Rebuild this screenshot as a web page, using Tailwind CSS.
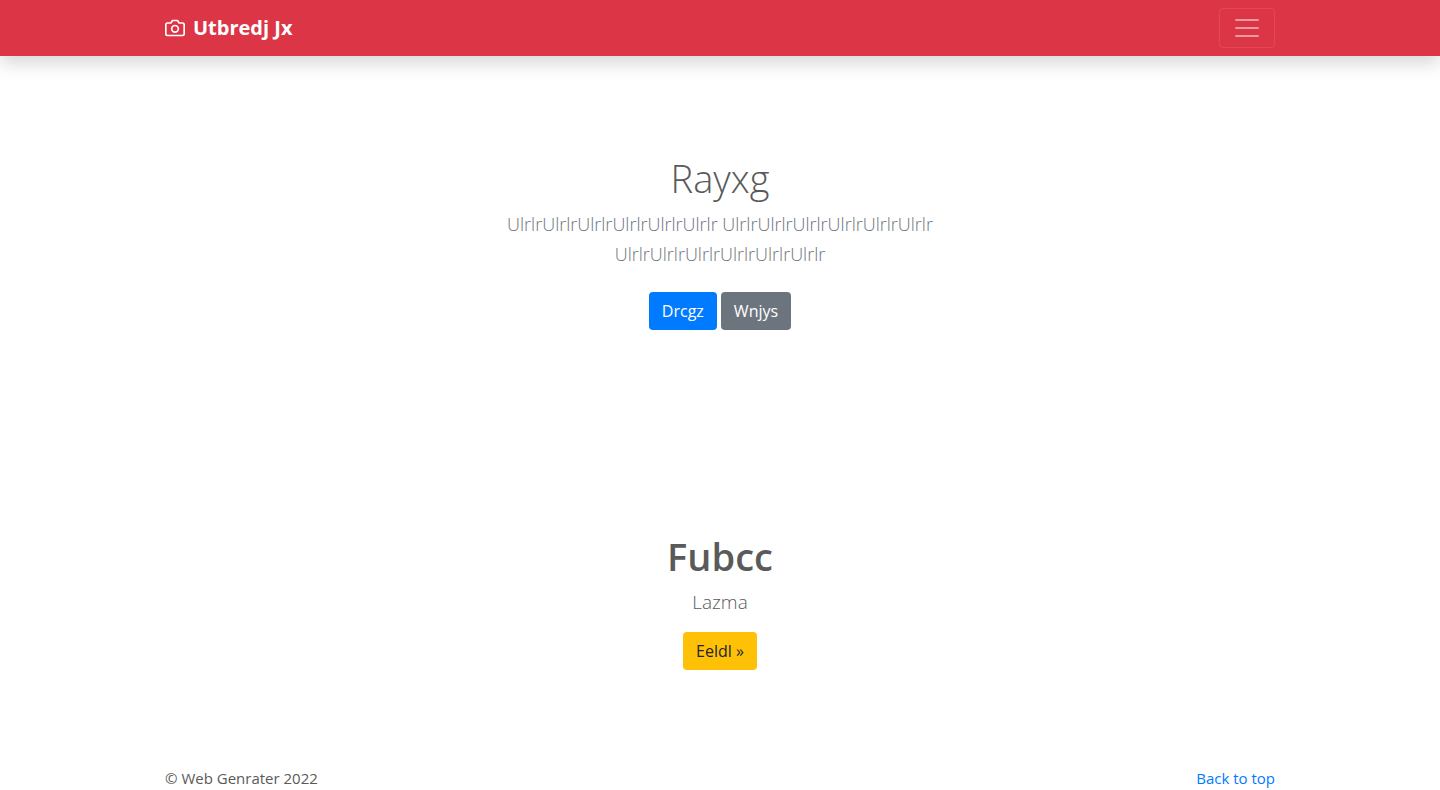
<!DOCTYPE html>
<html lang="en">
<head>
<meta charset="utf-8">
<meta name="viewport" content="width=device-width, initial-scale=1">
<title>Utbredj Jx</title>
<script src="https://cdn.jsdelivr.net/npm/@tailwindcss/browser@4"></script>
</head>
<body id="top" class="min-h-screen flex flex-col bg-white text-[#5a5a5a] text-base font-['Segoe_UI','Open_Sans','Noto_Sans',sans-serif]">
<header class="bg-[#dc3545] shadow-[0_8px_16px_rgba(0,0,0,0.15)]">
  <div class="max-w-[1110px] mx-auto h-14 flex items-center justify-between">
    <a href="#" class="flex items-center gap-2 text-white text-xl font-bold">
      <svg class="size-5" viewBox="0 0 24 24" fill="none" stroke="currentColor" stroke-width="2" stroke-linecap="round" stroke-linejoin="round" aria-hidden="true"><path d="M23 19a2 2 0 0 1-2 2H3a2 2 0 0 1-2-2V8a2 2 0 0 1 2-2h4l2-3h6l2 3h4a2 2 0 0 1 2 2z"/><circle cx="12" cy="13" r="4"/></svg>
      <span>Utbredj Jx</span>
    </a>
    <button type="button" aria-label="Toggle navigation" class="w-14 h-10 flex items-center justify-center rounded border border-white/10 text-white/50">
      <svg class="size-[30px]" viewBox="0 0 30 30" fill="none" stroke="currentColor" stroke-width="2" stroke-linecap="round" stroke-miterlimit="10" aria-hidden="true"><path d="M4 7h22M4 15h22M4 23h22"/></svg>
    </button>
  </div>
</header>
<main class="grow text-center">
  <section class="pt-[98px] pb-[202px] px-4">
    <h1 class="text-[38px] leading-[48px] font-light mb-[7px]">Rayxg</h1>
    <p class="max-w-[450px] mx-auto text-lg leading-[30px] font-light text-[#6c757d] mb-[23px]">UlrlrUlrlrUlrlrUlrlrUlrlrUlrlr UlrlrUlrlrUlrlrUlrlrUlrlrUlrlr UlrlrUlrlrUlrlrUlrlrUlrlrUlrlr</p>
    <div class="flex justify-center gap-1">
      <a href="#" class="h-[38px] px-[13px] leading-[38px] rounded bg-[#007bff] text-white">Drcgz</a>
      <a href="#" class="h-[38px] px-[13px] leading-[38px] rounded bg-[#6c757d] text-white">Wnjys</a>
    </div>
  </section>
  <section class="pb-24 px-4 flex flex-col items-center">
    <h2 class="text-[38px] leading-[48px] font-semibold mb-2">Fubcc</h2>
    <p class="text-[19px] leading-[28px] font-light mb-4">Lazma</p>
    <a href="#" class="h-[38px] px-[13px] leading-[38px] rounded bg-[#ffc107] text-[#212529]">Eeldl »</a>
  </section>
</main>
<footer class="w-full max-w-[1110px] mx-auto flex justify-between text-[15px] leading-6">
  <p>© Web Genrater 2022</p>
  <a href="#top" class="text-[#007bff]">Back to top</a>
</footer>
</body>
</html>
